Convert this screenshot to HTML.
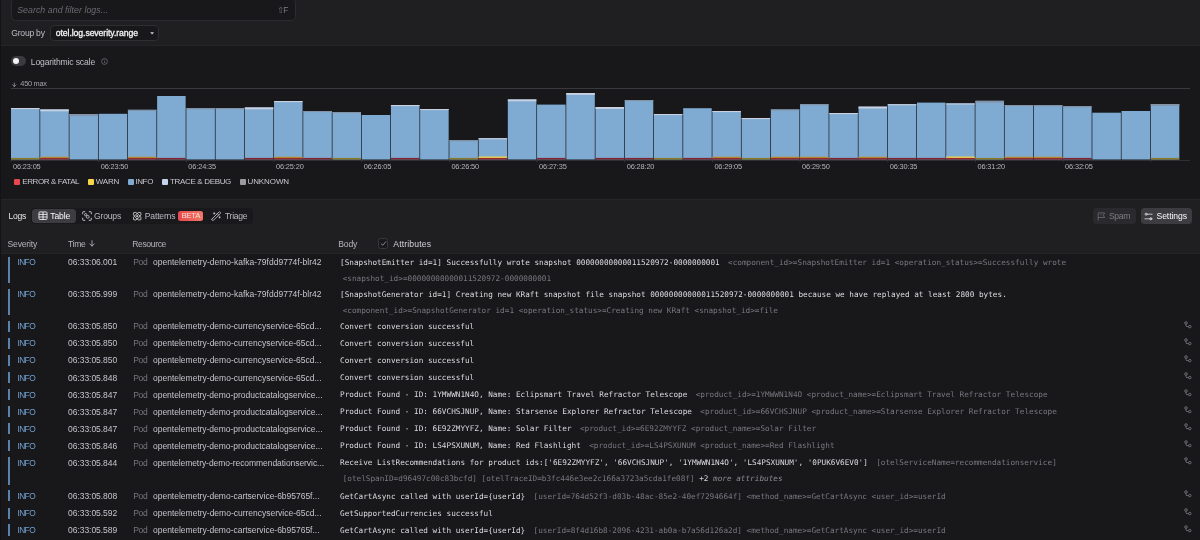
<!DOCTYPE html>
<html lang="en"><head><meta charset="utf-8"><title>Logs</title>
<style>
html,body{margin:0;padding:0;background:#18181b;}
body{width:1200px;height:540px;position:relative;overflow:hidden;font-family:"Liberation Sans", "DejaVu Sans", sans-serif;}
#app{position:absolute;left:0;top:0;width:1200px;height:540px;overflow:hidden;will-change:transform;}
#app>div,#app>svg{position:absolute;}
#app>span{position:absolute;white-space:pre;line-height:12px;height:12px;}
</style></head><body><div id="app">
<div style="left:0px;top:0px;width:1200px;height:45.6px;background:#1f1f22;"></div>
<div style="left:0px;top:45.6px;width:1200px;height:153.4px;background:#18181b;"></div>
<div style="left:0px;top:45.1px;width:1200px;height:1px;background:#252528;"></div>
<div style="left:0px;top:199px;width:1200px;height:55px;background:#1f1f22;"></div>
<div style="left:0px;top:198.6px;width:1200px;height:1px;background:#262629;"></div>
<div style="left:0px;top:254px;width:1200px;height:286px;background:#18181b;"></div>
<div style="left:0px;top:253.3px;width:1200px;height:0.8px;background:#242427;"></div>
<div style="left:0px;top:0px;width:1.2px;height:540px;background:#131315;"></div>
<div style="left:11px;top:-2.5px;width:284.7px;height:23.3px;background:#18181b;border:1px solid #2c2c30;border-radius:4.5px;box-sizing:border-box;"></div>
<div style="left:49.8px;top:25px;width:109.1px;height:16.1px;background:#18181b;border:1px solid #2e2e32;border-radius:4px;box-sizing:border-box;"></div>
<svg style="left:149.8px;top:32px" width="4.2" height="2.6" viewBox="0 0 4.2 2.6"><path d="M0.2 0.2 L4 0.2 L2.1 2.4 Z" fill="#d4d4d8"/></svg>
<div style="left:11.3px;top:56.3px;width:14.6px;height:9.6px;background:#3a3a3f;border-radius:5px;"></div>
<div style="left:12.7px;top:57.7px;width:6.8px;height:6.8px;background:#f4f4f5;border-radius:50%;"></div>
<svg style="left:101px;top:57.9px" width="7" height="7" viewBox="0 0 7 7"><circle cx="3.5" cy="3.5" r="2.9" fill="none" stroke="#77777f" stroke-width="0.7"/><path d="M3.5 3.1V5" stroke="#77777f" stroke-width="0.7"/><circle cx="3.5" cy="2.1" r="0.45" fill="#77777f"/></svg>
<svg style="left:12px;top:81.6px" width="4.6" height="5.4" viewBox="0 0 4.6 5.4" fill="none" stroke="#a1a1aa" stroke-width="0.75" stroke-linecap="round" stroke-linejoin="round"><path d="M2.3 1V4.6M0.6 2.9L2.3 4.6L4 2.9"/></svg>
<div style="left:11px;top:87.9px;width:1179px;height:0.9px;background:#3a3a3e;"></div>
<div style="left:11px;top:159.7px;width:1179px;height:0.8px;background:#303034;"></div>
<svg style="left:0;top:0" width="1200" height="200" viewBox="0 0 1200 200" shape-rendering="auto"><rect x="11.00" y="108.00" width="28.53" height="51.50" fill="#7fabd2"/><rect x="11.00" y="108.00" width="28.53" height="1.1" fill="#c9d0df"/><rect x="11.00" y="157.90" width="28.53" height="1.6" fill="#8a7a2c"/><rect x="40.23" y="109.40" width="28.53" height="50.10" fill="#7fabd2"/><rect x="40.23" y="109.40" width="28.53" height="1.9" fill="#c9d0df"/><rect x="40.23" y="156.70" width="28.53" height="1.3" fill="#b8922f"/><rect x="40.23" y="157.90" width="28.53" height="1.6" fill="#94282c"/><rect x="69.45" y="114.00" width="28.53" height="45.50" fill="#7fabd2"/><rect x="69.45" y="114.00" width="28.53" height="1.9" fill="#8493a6"/><rect x="98.68" y="113.80" width="28.53" height="45.70" fill="#7fabd2"/><rect x="127.90" y="109.80" width="28.53" height="49.70" fill="#7fabd2"/><rect x="127.90" y="109.80" width="28.53" height="1.1" fill="#8493a6"/><rect x="127.90" y="156.70" width="28.53" height="1.3" fill="#b8922f"/><rect x="127.90" y="157.90" width="28.53" height="1.6" fill="#94282c"/><rect x="157.12" y="96.00" width="28.53" height="63.50" fill="#7fabd2"/><rect x="157.12" y="157.90" width="28.53" height="1.6" fill="#7f2530"/><rect x="186.35" y="108.20" width="28.53" height="51.30" fill="#7fabd2"/><rect x="186.35" y="108.20" width="28.53" height="1.1" fill="#8493a6"/><rect x="215.58" y="108.00" width="28.53" height="51.50" fill="#7fabd2"/><rect x="215.58" y="108.00" width="28.53" height="1.1" fill="#8493a6"/><rect x="244.80" y="107.40" width="28.53" height="52.10" fill="#7fabd2"/><rect x="244.80" y="107.40" width="28.53" height="1.9" fill="#c9d0df"/><rect x="244.80" y="157.90" width="28.53" height="1.6" fill="#7f2530"/><rect x="274.03" y="101.00" width="28.53" height="58.50" fill="#7fabd2"/><rect x="274.03" y="101.00" width="28.53" height="1.1" fill="#c9d0df"/><rect x="274.03" y="156.70" width="28.53" height="1.3" fill="#b8922f"/><rect x="274.03" y="157.90" width="28.53" height="1.6" fill="#94282c"/><rect x="303.25" y="111.00" width="28.53" height="48.50" fill="#7fabd2"/><rect x="303.25" y="111.00" width="28.53" height="1.1" fill="#8493a6"/><rect x="303.25" y="157.90" width="28.53" height="1.6" fill="#7f2530"/><rect x="332.48" y="112.00" width="28.53" height="47.50" fill="#7fabd2"/><rect x="332.48" y="112.00" width="28.53" height="1.1" fill="#8493a6"/><rect x="332.48" y="157.90" width="28.53" height="1.6" fill="#8a7a2c"/><rect x="361.70" y="115.00" width="28.53" height="44.50" fill="#7fabd2"/><rect x="390.93" y="105.00" width="28.53" height="54.50" fill="#7fabd2"/><rect x="390.93" y="105.00" width="28.53" height="1.1" fill="#c9d0df"/><rect x="390.93" y="157.90" width="28.53" height="1.6" fill="#7f2530"/><rect x="420.15" y="109.00" width="28.53" height="50.50" fill="#7fabd2"/><rect x="420.15" y="109.00" width="28.53" height="1.1" fill="#c9d0df"/><rect x="449.38" y="140.20" width="28.53" height="19.30" fill="#7fabd2"/><rect x="449.38" y="140.20" width="28.53" height="1.1" fill="#8493a6"/><rect x="449.38" y="157.90" width="28.53" height="1.6" fill="#8a7a2c"/><rect x="478.60" y="138.20" width="28.53" height="21.30" fill="#7fabd2"/><rect x="478.60" y="138.20" width="28.53" height="1.1" fill="#c9d0df"/><rect x="478.60" y="156.50" width="28.53" height="1.5" fill="#ecd552"/><rect x="478.60" y="157.90" width="28.53" height="1.6" fill="#94282c"/><rect x="507.83" y="99.40" width="28.53" height="60.10" fill="#7fabd2"/><rect x="507.83" y="99.40" width="28.53" height="1.9" fill="#c9d0df"/><rect x="537.05" y="104.60" width="28.53" height="54.90" fill="#7fabd2"/><rect x="537.05" y="157.90" width="28.53" height="1.6" fill="#7f2530"/><rect x="566.27" y="93.00" width="28.53" height="66.50" fill="#7fabd2"/><rect x="566.27" y="93.00" width="28.53" height="1.9" fill="#c9d0df"/><rect x="595.50" y="107.00" width="28.53" height="52.50" fill="#7fabd2"/><rect x="595.50" y="107.00" width="28.53" height="1.9" fill="#c9d0df"/><rect x="595.50" y="157.90" width="28.53" height="1.6" fill="#7f2530"/><rect x="624.73" y="100.00" width="28.53" height="59.50" fill="#7fabd2"/><rect x="624.73" y="100.00" width="28.53" height="1.1" fill="#8493a6"/><rect x="624.73" y="157.90" width="28.53" height="1.6" fill="#7f2530"/><rect x="653.95" y="114.00" width="28.53" height="45.50" fill="#7fabd2"/><rect x="653.95" y="114.00" width="28.53" height="1.1" fill="#c9d0df"/><rect x="653.95" y="157.90" width="28.53" height="1.6" fill="#8a7a2c"/><rect x="683.18" y="108.20" width="28.53" height="51.30" fill="#7fabd2"/><rect x="683.18" y="157.90" width="28.53" height="1.6" fill="#7f2530"/><rect x="712.40" y="111.00" width="28.53" height="48.50" fill="#7fabd2"/><rect x="712.40" y="111.00" width="28.53" height="1.1" fill="#c9d0df"/><rect x="712.40" y="156.70" width="28.53" height="1.3" fill="#b8922f"/><rect x="712.40" y="157.90" width="28.53" height="1.6" fill="#94282c"/><rect x="741.62" y="118.00" width="28.53" height="41.50" fill="#7fabd2"/><rect x="741.62" y="118.00" width="28.53" height="1.1" fill="#c9d0df"/><rect x="741.62" y="157.90" width="28.53" height="1.6" fill="#8a7a2c"/><rect x="770.85" y="109.40" width="28.53" height="50.10" fill="#7fabd2"/><rect x="770.85" y="109.40" width="28.53" height="1.1" fill="#8493a6"/><rect x="770.85" y="156.70" width="28.53" height="1.3" fill="#b8922f"/><rect x="770.85" y="157.90" width="28.53" height="1.6" fill="#94282c"/><rect x="800.08" y="104.20" width="28.53" height="55.30" fill="#7fabd2"/><rect x="800.08" y="104.20" width="28.53" height="1.1" fill="#8493a6"/><rect x="800.08" y="156.70" width="28.53" height="1.3" fill="#b8922f"/><rect x="800.08" y="157.90" width="28.53" height="1.6" fill="#94282c"/><rect x="829.30" y="113.00" width="28.53" height="46.50" fill="#7fabd2"/><rect x="829.30" y="113.00" width="28.53" height="1.1" fill="#c9d0df"/><rect x="829.30" y="157.90" width="28.53" height="1.6" fill="#7f2530"/><rect x="858.53" y="106.60" width="28.53" height="52.90" fill="#7fabd2"/><rect x="858.53" y="106.60" width="28.53" height="1.9" fill="#c9d0df"/><rect x="858.53" y="156.70" width="28.53" height="1.3" fill="#b8922f"/><rect x="858.53" y="157.90" width="28.53" height="1.6" fill="#94282c"/><rect x="887.75" y="104.20" width="28.53" height="55.30" fill="#7fabd2"/><rect x="887.75" y="104.20" width="28.53" height="1.1" fill="#c9d0df"/><rect x="887.75" y="157.90" width="28.53" height="1.6" fill="#7f2530"/><rect x="916.98" y="102.60" width="28.53" height="56.90" fill="#7fabd2"/><rect x="916.98" y="157.90" width="28.53" height="1.6" fill="#7f2530"/><rect x="946.20" y="103.40" width="28.53" height="56.10" fill="#7fabd2"/><rect x="946.20" y="103.40" width="28.53" height="1.1" fill="#c9d0df"/><rect x="946.20" y="156.50" width="28.53" height="1.5" fill="#ecd552"/><rect x="946.20" y="157.90" width="28.53" height="1.6" fill="#94282c"/><rect x="975.43" y="100.80" width="28.53" height="58.70" fill="#7fabd2"/><rect x="975.43" y="100.80" width="28.53" height="1.9" fill="#8493a6"/><rect x="975.43" y="157.90" width="28.53" height="1.6" fill="#8a7a2c"/><rect x="1004.65" y="105.00" width="28.53" height="54.50" fill="#7fabd2"/><rect x="1004.65" y="105.00" width="28.53" height="1.1" fill="#8493a6"/><rect x="1004.65" y="156.70" width="28.53" height="1.3" fill="#b8922f"/><rect x="1004.65" y="157.90" width="28.53" height="1.6" fill="#94282c"/><rect x="1033.88" y="105.20" width="28.53" height="54.30" fill="#7fabd2"/><rect x="1033.88" y="105.20" width="28.53" height="1.1" fill="#8493a6"/><rect x="1033.88" y="156.70" width="28.53" height="1.3" fill="#b8922f"/><rect x="1033.88" y="157.90" width="28.53" height="1.6" fill="#94282c"/><rect x="1063.10" y="106.20" width="28.53" height="53.30" fill="#7fabd2"/><rect x="1063.10" y="106.20" width="28.53" height="1.1" fill="#8493a6"/><rect x="1063.10" y="157.90" width="28.53" height="1.6" fill="#7f2530"/><rect x="1092.33" y="112.70" width="28.53" height="46.80" fill="#7fabd2"/><rect x="1121.55" y="111.00" width="28.53" height="48.50" fill="#7fabd2"/><rect x="1150.78" y="104.00" width="28.53" height="55.50" fill="#7fabd2"/><rect x="1150.78" y="104.00" width="28.53" height="1.9" fill="#8493a6"/><rect x="1150.78" y="157.90" width="28.53" height="1.6" fill="#8a7a2c"/><rect x="10.60" y="160" width="0.8" height="2.2" fill="#3a3a3e"/><rect x="98.28" y="160" width="0.8" height="2.2" fill="#3a3a3e"/><rect x="185.95" y="160" width="0.8" height="2.2" fill="#3a3a3e"/><rect x="273.63" y="160" width="0.8" height="2.2" fill="#3a3a3e"/><rect x="361.30" y="160" width="0.8" height="2.2" fill="#3a3a3e"/><rect x="448.98" y="160" width="0.8" height="2.2" fill="#3a3a3e"/><rect x="536.65" y="160" width="0.8" height="2.2" fill="#3a3a3e"/><rect x="624.33" y="160" width="0.8" height="2.2" fill="#3a3a3e"/><rect x="712.00" y="160" width="0.8" height="2.2" fill="#3a3a3e"/><rect x="799.68" y="160" width="0.8" height="2.2" fill="#3a3a3e"/><rect x="887.35" y="160" width="0.8" height="2.2" fill="#3a3a3e"/><rect x="975.03" y="160" width="0.8" height="2.2" fill="#3a3a3e"/><rect x="1062.70" y="160" width="0.8" height="2.2" fill="#3a3a3e"/><rect x="1150.38" y="160" width="0.8" height="2.2" fill="#3a3a3e"/></svg>
<div style="left:13.6px;top:178.5px;width:6.2px;height:6.3px;background:#e5484d;border-radius:1px;"></div>
<div style="left:87.6px;top:178.5px;width:6.2px;height:6.3px;background:#f9d648;border-radius:1px;"></div>
<div style="left:127.6px;top:178.5px;width:6.2px;height:6.3px;background:#7fabd2;border-radius:1px;"></div>
<div style="left:161.6px;top:178.5px;width:6.2px;height:6.3px;background:#c5d3ec;border-radius:1px;"></div>
<div style="left:239.6px;top:178.5px;width:6.2px;height:6.3px;background:#9a9aa0;border-radius:1px;"></div>
<div style="left:31px;top:207.8px;width:222px;height:16.6px;background:#19191c;border-radius:4px;"></div>
<div style="left:32px;top:208.8px;width:43.5px;height:14.6px;background:#3c3c41;border-radius:3.5px;"></div>
<div style="left:178px;top:211px;width:25.3px;height:10.4px;background:linear-gradient(90deg,#e5484d,#ef7865);border-radius:2.5px;"></div>
<svg style="left:37.6px;top:211.4px" width="10" height="9.4" viewBox="0 0 10 9.4" fill="none" stroke="#f4f4f5" stroke-width="0.9"><rect x="0.95" y="0.95" width="8.1" height="7.5" rx="0.9"/><path d="M0.95 3.4H9.05M0.95 6H9.05M5 0.95V8.45"/></svg>
<svg style="left:81.7px;top:211.2px" width="10" height="10" viewBox="0 0 10 10" fill="none" stroke="#d4d4d8" stroke-width="0.8"><path d="M0.7 3.2V1.3Q0.7 0.7 1.3 0.7H3.2M6.8 0.7H8.7Q9.3 0.7 9.3 1.3V3.2M9.3 6.8V8.7Q9.3 9.3 8.7 9.3H6.8M3.2 9.3H1.3Q0.7 9.3 0.7 8.7V6.8" stroke-width="0.9"/><circle cx="3.7" cy="3.7" r="1.15"/><rect x="4.4" y="4.6" width="2.7" height="2.5" rx="0.9"/></svg>
<svg style="left:132.2px;top:211px" width="10.4" height="10.4" viewBox="0 0 10.4 10.4" fill="none" stroke="#d4d4d8" stroke-width="0.8"><ellipse cx="5.2" cy="5.2" rx="5" ry="2.2" transform="rotate(45 5.2 5.2)"/><ellipse cx="5.2" cy="5.2" rx="5" ry="2.2" transform="rotate(-45 5.2 5.2)"/><circle cx="5.2" cy="5.2" r="0.7" fill="#d4d4d8"/></svg>
<svg style="left:211px;top:211px" width="10.4" height="10.4" viewBox="0 0 10.4 10.4" fill="none" stroke="#d4d4d8" stroke-width="0.9" stroke-linecap="round"><rect x="-0.4" y="4.2" width="11.2" height="2" rx="0.6" transform="rotate(-45 5.2 5.2)" stroke-width="0.75"/><path d="M6.3 2.7L7.7 4.1" stroke-width="0.7"/><path d="M3.2 1.6V3.2M2.4 2.4H4M8.6 5.6V7M7.9 6.3H9.3" stroke-width="0.7"/></svg>
<div style="left:1093px;top:208px;width:42.8px;height:16.2px;background:#2a2a2e;border-radius:3.5px;"></div>
<svg style="left:1096.8px;top:211.5px" width="9" height="9" viewBox="0 0 9 9" fill="none" stroke="#6d6d75" stroke-width="0.8"><path d="M1.2 8.4V0.9H7.6L6.4 3.2L7.6 5.5H1.2"/><path d="M4 2.2V3.4M4 4.2V4.3"/></svg>
<div style="left:1140.5px;top:208px;width:51.5px;height:16.2px;background:#3c3c41;border-radius:3.5px;"></div>
<svg style="left:1144.3px;top:211.7px" width="9" height="9" viewBox="0 0 9 9" fill="none" stroke="#e4e4e7" stroke-width="0.8" stroke-linecap="round"><path d="M3.3 2.2H8.1M0.9 6.8H5.6"/><circle cx="2.1" cy="2.2" r="1.05"/><circle cx="6.8" cy="6.8" r="1.05" fill="#e4e4e7" fill-opacity="0.5"/></svg>
<svg style="left:89.4px;top:240.4px" width="6" height="7" viewBox="0 0 6 7" fill="none" stroke="#b4b4bb" stroke-width="0.85" stroke-linecap="round" stroke-linejoin="round"><path d="M3 0.7V6.1M0.8 3.9L3 6.1L5.2 3.9"/></svg>
<div style="left:377.5px;top:238px;width:10.6px;height:10.6px;background:#19191c;border:0.8px solid #38383d;border-radius:2.5px;box-sizing:border-box;"></div>
<svg style="left:379.5px;top:240px" width="7" height="7" viewBox="0 0 7 7" fill="none" stroke="#a1a1aa" stroke-width="0.8" stroke-linecap="round" stroke-linejoin="round"><path d="M1.2 3.8L2.8 5.3L5.8 1.7"/></svg>
<div style="left:7.95px;top:256.7px;width:1.85px;height:26.19999999999999px;background:#5a82aa;"></div>
<div style="left:7.95px;top:288.7px;width:1.85px;height:25.900000000000034px;background:#5a82aa;"></div>
<div style="left:7.95px;top:320.7px;width:1.85px;height:11.399999999999977px;background:#5a82aa;"></div>
<svg style="left:1184.4px;top:320.8px" width="8.4" height="8.4" viewBox="0 0 8.4 8.4" fill="none" stroke="#8b8b93" stroke-width="0.7"><circle cx="2" cy="2" r="1.3"/><circle cx="5.8" cy="5.6" r="1.25"/><path d="M2 3.25V4.6Q2 5.6 3 5.6H4.55"/></svg>
<div style="left:7.95px;top:337.7px;width:1.85px;height:11.399999999999977px;background:#5a82aa;"></div>
<svg style="left:1184.4px;top:337.8px" width="8.4" height="8.4" viewBox="0 0 8.4 8.4" fill="none" stroke="#8b8b93" stroke-width="0.7"><circle cx="2" cy="2" r="1.3"/><circle cx="5.8" cy="5.6" r="1.25"/><path d="M2 3.25V4.6Q2 5.6 3 5.6H4.55"/></svg>
<div style="left:7.95px;top:354.7px;width:1.85px;height:11.399999999999977px;background:#5a82aa;"></div>
<svg style="left:1184.4px;top:354.8px" width="8.4" height="8.4" viewBox="0 0 8.4 8.4" fill="none" stroke="#8b8b93" stroke-width="0.7"><circle cx="2" cy="2" r="1.3"/><circle cx="5.8" cy="5.6" r="1.25"/><path d="M2 3.25V4.6Q2 5.6 3 5.6H4.55"/></svg>
<div style="left:7.95px;top:371.8px;width:1.85px;height:11.399999999999977px;background:#5a82aa;"></div>
<svg style="left:1184.4px;top:371.9px" width="8.4" height="8.4" viewBox="0 0 8.4 8.4" fill="none" stroke="#8b8b93" stroke-width="0.7"><circle cx="2" cy="2" r="1.3"/><circle cx="5.8" cy="5.6" r="1.25"/><path d="M2 3.25V4.6Q2 5.6 3 5.6H4.55"/></svg>
<div style="left:7.95px;top:388.90000000000003px;width:1.85px;height:11.399999999999977px;background:#5a82aa;"></div>
<svg style="left:1184.4px;top:389.0px" width="8.4" height="8.4" viewBox="0 0 8.4 8.4" fill="none" stroke="#8b8b93" stroke-width="0.7"><circle cx="2" cy="2" r="1.3"/><circle cx="5.8" cy="5.6" r="1.25"/><path d="M2 3.25V4.6Q2 5.6 3 5.6H4.55"/></svg>
<div style="left:7.95px;top:405.90000000000003px;width:1.85px;height:11.399999999999977px;background:#5a82aa;"></div>
<svg style="left:1184.4px;top:406.0px" width="8.4" height="8.4" viewBox="0 0 8.4 8.4" fill="none" stroke="#8b8b93" stroke-width="0.7"><circle cx="2" cy="2" r="1.3"/><circle cx="5.8" cy="5.6" r="1.25"/><path d="M2 3.25V4.6Q2 5.6 3 5.6H4.55"/></svg>
<div style="left:7.95px;top:422.90000000000003px;width:1.85px;height:11.399999999999977px;background:#5a82aa;"></div>
<svg style="left:1184.4px;top:423.0px" width="8.4" height="8.4" viewBox="0 0 8.4 8.4" fill="none" stroke="#8b8b93" stroke-width="0.7"><circle cx="2" cy="2" r="1.3"/><circle cx="5.8" cy="5.6" r="1.25"/><path d="M2 3.25V4.6Q2 5.6 3 5.6H4.55"/></svg>
<div style="left:7.95px;top:439.90000000000003px;width:1.85px;height:11.399999999999977px;background:#5a82aa;"></div>
<svg style="left:1184.4px;top:440.0px" width="8.4" height="8.4" viewBox="0 0 8.4 8.4" fill="none" stroke="#8b8b93" stroke-width="0.7"><circle cx="2" cy="2" r="1.3"/><circle cx="5.8" cy="5.6" r="1.25"/><path d="M2 3.25V4.6Q2 5.6 3 5.6H4.55"/></svg>
<div style="left:7.95px;top:456.8px;width:1.85px;height:28.0px;background:#5a82aa;"></div>
<svg style="left:1184.4px;top:456.9px" width="8.4" height="8.4" viewBox="0 0 8.4 8.4" fill="none" stroke="#8b8b93" stroke-width="0.7"><circle cx="2" cy="2" r="1.3"/><circle cx="5.8" cy="5.6" r="1.25"/><path d="M2 3.25V4.6Q2 5.6 3 5.6H4.55"/></svg>
<div style="left:7.95px;top:490.1px;width:1.85px;height:11.399999999999977px;background:#5a82aa;"></div>
<svg style="left:1184.4px;top:490.2px" width="8.4" height="8.4" viewBox="0 0 8.4 8.4" fill="none" stroke="#8b8b93" stroke-width="0.7"><circle cx="2" cy="2" r="1.3"/><circle cx="5.8" cy="5.6" r="1.25"/><path d="M2 3.25V4.6Q2 5.6 3 5.6H4.55"/></svg>
<div style="left:7.95px;top:507.50000000000006px;width:1.85px;height:11.400000000000034px;background:#5a82aa;"></div>
<svg style="left:1184.4px;top:507.6px" width="8.4" height="8.4" viewBox="0 0 8.4 8.4" fill="none" stroke="#8b8b93" stroke-width="0.7"><circle cx="2" cy="2" r="1.3"/><circle cx="5.8" cy="5.6" r="1.25"/><path d="M2 3.25V4.6Q2 5.6 3 5.6H4.55"/></svg>
<div style="left:7.95px;top:524.4px;width:1.85px;height:11.400000000000091px;background:#5a82aa;"></div>
<svg style="left:1184.4px;top:524.5px" width="8.4" height="8.4" viewBox="0 0 8.4 8.4" fill="none" stroke="#8b8b93" stroke-width="0.7"><circle cx="2" cy="2" r="1.3"/><circle cx="5.8" cy="5.6" r="1.25"/><path d="M2 3.25V4.6Q2 5.6 3 5.6H4.55"/></svg>
<span id="t0" style='left:17.20px;top:4.20px;font-size:8.8px;color:#6b6b73;font-style:italic;letter-spacing:0.041px;'>Search and filter logs...</span>
<span id="t1" style='left:277.20px;top:4.20px;font-size:8.2px;color:#6b6b73;font-family:"DejaVu Sans", sans-serif;'>⇧</span>
<span id="t2" style='left:283.30px;top:4.20px;font-size:8.3px;color:#7c7c84;letter-spacing:-0.878px;'>F</span>
<span id="t3" style='left:11.30px;top:27.20px;font-size:8.6px;color:#bcbcc3;letter-spacing:-0.245px;'>Group by</span>
<span id="t4" style='left:55.80px;top:27.20px;font-size:8.7px;color:#f4f4f5;-webkit-text-stroke:0.3px #f4f4f5;letter-spacing:-0.094px;'>otel.log.severity.range</span>
<span id="t5" style='left:30.80px;top:56.00px;font-size:8.6px;color:#bfbfc6;letter-spacing:-0.157px;'>Logarithmic scale</span>
<span id="t6" style='left:20.30px;top:77.80px;font-size:7.4px;color:#a1a1aa;letter-spacing:-0.280px;'>450 max</span>
<span id="t7" style='left:13.00px;top:160.70px;font-size:7.4px;color:#b4b4bb;letter-spacing:-0.148px;'>06:23:05</span>
<span id="t8" style='left:100.68px;top:160.70px;font-size:7.4px;color:#b4b4bb;letter-spacing:-0.148px;'>06:23:50</span>
<span id="t9" style='left:188.35px;top:160.70px;font-size:7.4px;color:#b4b4bb;letter-spacing:-0.148px;'>06:24:35</span>
<span id="t10" style='left:276.03px;top:160.70px;font-size:7.4px;color:#b4b4bb;letter-spacing:-0.148px;'>06:25:20</span>
<span id="t11" style='left:363.70px;top:160.70px;font-size:7.4px;color:#b4b4bb;letter-spacing:-0.148px;'>06:26:05</span>
<span id="t12" style='left:451.38px;top:160.70px;font-size:7.4px;color:#b4b4bb;letter-spacing:-0.148px;'>06:26:50</span>
<span id="t13" style='left:539.05px;top:160.70px;font-size:7.4px;color:#b4b4bb;letter-spacing:-0.148px;'>06:27:35</span>
<span id="t14" style='left:626.73px;top:160.70px;font-size:7.4px;color:#b4b4bb;letter-spacing:-0.148px;'>06:28:20</span>
<span id="t15" style='left:714.40px;top:160.70px;font-size:7.4px;color:#b4b4bb;letter-spacing:-0.148px;'>06:29:05</span>
<span id="t16" style='left:802.08px;top:160.70px;font-size:7.4px;color:#b4b4bb;letter-spacing:-0.148px;'>06:29:50</span>
<span id="t17" style='left:889.75px;top:160.70px;font-size:7.4px;color:#b4b4bb;letter-spacing:-0.148px;'>06:30:35</span>
<span id="t18" style='left:977.43px;top:160.70px;font-size:7.4px;color:#b4b4bb;letter-spacing:-0.148px;'>06:31:20</span>
<span id="t19" style='left:1065.10px;top:160.70px;font-size:7.4px;color:#b4b4bb;letter-spacing:-0.148px;'>06:32:05</span>
<span id="t20" style='left:22.20px;top:175.90px;font-size:8.0px;color:#c9c9cf;letter-spacing:-0.380px;'>ERROR &amp; FATAL</span>
<span id="t21" style='left:95.80px;top:175.90px;font-size:8.0px;color:#c9c9cf;letter-spacing:-0.189px;'>WARN</span>
<span id="t22" style='left:135.30px;top:175.90px;font-size:8.0px;color:#c9c9cf;letter-spacing:-0.352px;'>INFO</span>
<span id="t23" style='left:170.00px;top:175.90px;font-size:8.0px;color:#c9c9cf;letter-spacing:-0.334px;'>TRACE &amp; DEBUG</span>
<span id="t24" style='left:247.50px;top:175.90px;font-size:8.0px;color:#c9c9cf;letter-spacing:-0.103px;'>UNKNOWN</span>
<span id="t25" style='left:8.50px;top:210.20px;font-size:8.6px;color:#e4e4e7;letter-spacing:-0.260px;'>Logs</span>
<span id="t26" style='left:50.30px;top:210.20px;font-size:8.6px;color:#fafafa;letter-spacing:-0.149px;'>Table</span>
<span id="t27" style='left:94.00px;top:210.20px;font-size:8.6px;color:#b9b9c0;letter-spacing:-0.198px;'>Groups</span>
<span id="t28" style='left:144.80px;top:210.20px;font-size:8.6px;color:#b9b9c0;letter-spacing:-0.189px;'>Patterns</span>
<span id="t29" style='left:181.40px;top:210.30px;font-size:7.8px;color:#ffdcd6;letter-spacing:-0.274px;'>BETA</span>
<span id="t30" style='left:225.00px;top:210.20px;font-size:8.6px;color:#b9b9c0;letter-spacing:-0.308px;'>Triage</span>
<span id="t31" style='left:1109.00px;top:210.20px;font-size:8.6px;color:#7d7d85;letter-spacing:-0.363px;'>Spam</span>
<span id="t32" style='left:1156.50px;top:210.20px;font-size:8.6px;color:#fafafa;letter-spacing:-0.070px;'>Settings</span>
<span id="t33" style='left:7.50px;top:237.60px;font-size:8.6px;color:#b4b4bb;letter-spacing:-0.193px;'>Severity</span>
<span id="t34" style='left:68.00px;top:237.60px;font-size:8.6px;color:#b4b4bb;letter-spacing:-0.320px;'>Time</span>
<span id="t35" style='left:132.20px;top:237.60px;font-size:8.6px;color:#b4b4bb;letter-spacing:-0.373px;'>Resource</span>
<span id="t36" style='left:338.30px;top:237.60px;font-size:8.6px;color:#b4b4bb;letter-spacing:-0.198px;'>Body</span>
<span id="t37" style='left:393.30px;top:237.60px;font-size:8.6px;color:#d4d4d8;letter-spacing:0.149px;'>Attributes</span>
<span id="t38" style='left:17.40px;top:256.40px;font-size:8.4px;color:#72a0cf;letter-spacing:-0.579px;'>INFO</span>
<span id="t39" style='left:68.00px;top:256.40px;font-size:8.5px;color:#c4c4cb;letter-spacing:-0.037px;'>06:33:06.001</span>
<span id="t40" style='left:133.30px;top:256.40px;font-size:8.5px;color:#77777f;letter-spacing:-0.375px;'>Pod</span>
<span id="t41" style='left:153.00px;top:256.40px;font-size:8.5px;color:#c4c4cb;letter-spacing:0.007px;'>opentelemetry-demo-kafka-79fdd9774f-blr42</span>
<span id="t42" style='left:340.00px;top:257.20px;font-size:7.69px;color:#dcdce0;font-family:"DejaVu Sans Mono", "Liberation Mono", monospace;letter-spacing:0.002px;'>[SnapshotEmitter id=1] Successfully wrote snapshot 00000000000011520972-0000000001</span>
<span id="t43" style='left:728.06px;top:257.20px;font-size:7.69px;color:#77777f;font-family:"DejaVu Sans Mono", "Liberation Mono", monospace;letter-spacing:0.002px;'>&lt;component_id&gt;=SnapshotEmitter id=1 &lt;operation_status&gt;=Successfully wrote</span>
<span id="t44" style='left:342.70px;top:273.20px;font-size:7.69px;color:#77777f;font-family:"DejaVu Sans Mono", "Liberation Mono", monospace;letter-spacing:0.002px;'>&lt;snapshot_id&gt;=00000000000011520972-0000000001</span>
<span id="t45" style='left:17.40px;top:288.40px;font-size:8.4px;color:#72a0cf;letter-spacing:-0.579px;'>INFO</span>
<span id="t46" style='left:68.00px;top:288.40px;font-size:8.5px;color:#c4c4cb;letter-spacing:-0.037px;'>06:33:05.999</span>
<span id="t47" style='left:133.30px;top:288.40px;font-size:8.5px;color:#77777f;letter-spacing:-0.375px;'>Pod</span>
<span id="t48" style='left:153.00px;top:288.40px;font-size:8.5px;color:#c4c4cb;letter-spacing:0.007px;'>opentelemetry-demo-kafka-79fdd9774f-blr42</span>
<span id="t49" style='left:340.00px;top:289.20px;font-size:7.69px;color:#dcdce0;font-family:"DejaVu Sans Mono", "Liberation Mono", monospace;letter-spacing:0.002px;'>[SnapshotGenerator id=1] Creating new KRaft snapshot file snapshot 00000000000011520972-0000000001 because we have replayed at least 2800 bytes.</span>
<span id="t50" style='left:342.70px;top:305.20px;font-size:7.69px;color:#77777f;font-family:"DejaVu Sans Mono", "Liberation Mono", monospace;letter-spacing:0.002px;'>&lt;component_id&gt;=SnapshotGenerator id=1 &lt;operation_status&gt;=Creating new KRaft &lt;snapshot_id&gt;=file</span>
<span id="t51" style='left:17.40px;top:320.40px;font-size:8.4px;color:#72a0cf;letter-spacing:-0.579px;'>INFO</span>
<span id="t52" style='left:68.00px;top:320.40px;font-size:8.5px;color:#c4c4cb;letter-spacing:-0.037px;'>06:33:05.850</span>
<span id="t53" style='left:133.30px;top:320.40px;font-size:8.5px;color:#77777f;letter-spacing:-0.375px;'>Pod</span>
<span id="t54" style='left:153.00px;top:320.40px;font-size:8.5px;color:#c4c4cb;letter-spacing:-0.004px;'>opentelemetry-demo-currencyservice-65cd...</span>
<span id="t55" style='left:340.00px;top:321.20px;font-size:7.69px;color:#dcdce0;font-family:"DejaVu Sans Mono", "Liberation Mono", monospace;letter-spacing:0.001px;'>Convert conversion successful</span>
<span id="t56" style='left:17.40px;top:337.40px;font-size:8.4px;color:#72a0cf;letter-spacing:-0.579px;'>INFO</span>
<span id="t57" style='left:68.00px;top:337.40px;font-size:8.5px;color:#c4c4cb;letter-spacing:-0.037px;'>06:33:05.850</span>
<span id="t58" style='left:133.30px;top:337.40px;font-size:8.5px;color:#77777f;letter-spacing:-0.375px;'>Pod</span>
<span id="t59" style='left:153.00px;top:337.40px;font-size:8.5px;color:#c4c4cb;letter-spacing:-0.004px;'>opentelemetry-demo-currencyservice-65cd...</span>
<span id="t60" style='left:340.00px;top:338.20px;font-size:7.69px;color:#dcdce0;font-family:"DejaVu Sans Mono", "Liberation Mono", monospace;letter-spacing:0.001px;'>Convert conversion successful</span>
<span id="t61" style='left:17.40px;top:354.40px;font-size:8.4px;color:#72a0cf;letter-spacing:-0.579px;'>INFO</span>
<span id="t62" style='left:68.00px;top:354.40px;font-size:8.5px;color:#c4c4cb;letter-spacing:-0.037px;'>06:33:05.850</span>
<span id="t63" style='left:133.30px;top:354.40px;font-size:8.5px;color:#77777f;letter-spacing:-0.375px;'>Pod</span>
<span id="t64" style='left:153.00px;top:354.40px;font-size:8.5px;color:#c4c4cb;letter-spacing:-0.004px;'>opentelemetry-demo-currencyservice-65cd...</span>
<span id="t65" style='left:340.00px;top:355.20px;font-size:7.69px;color:#dcdce0;font-family:"DejaVu Sans Mono", "Liberation Mono", monospace;letter-spacing:0.001px;'>Convert conversion successful</span>
<span id="t66" style='left:17.40px;top:371.50px;font-size:8.4px;color:#72a0cf;letter-spacing:-0.579px;'>INFO</span>
<span id="t67" style='left:68.00px;top:371.50px;font-size:8.5px;color:#c4c4cb;letter-spacing:-0.037px;'>06:33:05.848</span>
<span id="t68" style='left:133.30px;top:371.50px;font-size:8.5px;color:#77777f;letter-spacing:-0.375px;'>Pod</span>
<span id="t69" style='left:153.00px;top:371.50px;font-size:8.5px;color:#c4c4cb;letter-spacing:-0.004px;'>opentelemetry-demo-currencyservice-65cd...</span>
<span id="t70" style='left:340.00px;top:372.30px;font-size:7.69px;color:#dcdce0;font-family:"DejaVu Sans Mono", "Liberation Mono", monospace;letter-spacing:0.001px;'>Convert conversion successful</span>
<span id="t71" style='left:17.40px;top:388.60px;font-size:8.4px;color:#72a0cf;letter-spacing:-0.579px;'>INFO</span>
<span id="t72" style='left:68.00px;top:388.60px;font-size:8.5px;color:#c4c4cb;letter-spacing:-0.037px;'>06:33:05.847</span>
<span id="t73" style='left:133.30px;top:388.60px;font-size:8.5px;color:#77777f;letter-spacing:-0.375px;'>Pod</span>
<span id="t74" style='left:153.00px;top:388.60px;font-size:8.5px;color:#c4c4cb;letter-spacing:-0.025px;'>opentelemetry-demo-productcatalogservice...</span>
<span id="t75" style='left:340.00px;top:389.40px;font-size:7.69px;color:#dcdce0;font-family:"DejaVu Sans Mono", "Liberation Mono", monospace;letter-spacing:0.002px;'>Product Found - ID: 1YMWWN1N4O, Name: Eclipsmart Travel Refractor Telescope</span>
<span id="t76" style='left:695.65px;top:389.40px;font-size:7.69px;color:#77777f;font-family:"DejaVu Sans Mono", "Liberation Mono", monospace;letter-spacing:0.002px;'>&lt;product_id&gt;=1YMWWN1N4O &lt;product_name&gt;=Eclipsmart Travel Refractor Telescope</span>
<span id="t77" style='left:17.40px;top:405.60px;font-size:8.4px;color:#72a0cf;letter-spacing:-0.579px;'>INFO</span>
<span id="t78" style='left:68.00px;top:405.60px;font-size:8.5px;color:#c4c4cb;letter-spacing:-0.037px;'>06:33:05.847</span>
<span id="t79" style='left:133.30px;top:405.60px;font-size:8.5px;color:#77777f;letter-spacing:-0.375px;'>Pod</span>
<span id="t80" style='left:153.00px;top:405.60px;font-size:8.5px;color:#c4c4cb;letter-spacing:-0.025px;'>opentelemetry-demo-productcatalogservice...</span>
<span id="t81" style='left:340.00px;top:406.40px;font-size:7.69px;color:#dcdce0;font-family:"DejaVu Sans Mono", "Liberation Mono", monospace;letter-spacing:0.002px;'>Product Found - ID: 66VCHSJNUP, Name: Starsense Explorer Refractor Telescope</span>
<span id="t82" style='left:700.28px;top:406.40px;font-size:7.69px;color:#77777f;font-family:"DejaVu Sans Mono", "Liberation Mono", monospace;letter-spacing:0.002px;'>&lt;product_id&gt;=66VCHSJNUP &lt;product_name&gt;=Starsense Explorer Refractor Telescope</span>
<span id="t83" style='left:17.40px;top:422.60px;font-size:8.4px;color:#72a0cf;letter-spacing:-0.579px;'>INFO</span>
<span id="t84" style='left:68.00px;top:422.60px;font-size:8.5px;color:#c4c4cb;letter-spacing:-0.037px;'>06:33:05.847</span>
<span id="t85" style='left:133.30px;top:422.60px;font-size:8.5px;color:#77777f;letter-spacing:-0.375px;'>Pod</span>
<span id="t86" style='left:153.00px;top:422.60px;font-size:8.5px;color:#c4c4cb;letter-spacing:-0.025px;'>opentelemetry-demo-productcatalogservice...</span>
<span id="t87" style='left:340.00px;top:423.40px;font-size:7.69px;color:#dcdce0;font-family:"DejaVu Sans Mono", "Liberation Mono", monospace;letter-spacing:0.002px;'>Product Found - ID: 6E92ZMYYFZ, Name: Solar Filter</span>
<span id="t88" style='left:579.90px;top:423.40px;font-size:7.69px;color:#77777f;font-family:"DejaVu Sans Mono", "Liberation Mono", monospace;letter-spacing:0.002px;'>&lt;product_id&gt;=6E92ZMYYFZ &lt;product_name&gt;=Solar Filter</span>
<span id="t89" style='left:17.40px;top:439.60px;font-size:8.4px;color:#72a0cf;letter-spacing:-0.579px;'>INFO</span>
<span id="t90" style='left:68.00px;top:439.60px;font-size:8.5px;color:#c4c4cb;letter-spacing:-0.037px;'>06:33:05.846</span>
<span id="t91" style='left:133.30px;top:439.60px;font-size:8.5px;color:#77777f;letter-spacing:-0.375px;'>Pod</span>
<span id="t92" style='left:153.00px;top:439.60px;font-size:8.5px;color:#c4c4cb;letter-spacing:-0.025px;'>opentelemetry-demo-productcatalogservice...</span>
<span id="t93" style='left:340.00px;top:440.40px;font-size:7.69px;color:#dcdce0;font-family:"DejaVu Sans Mono", "Liberation Mono", monospace;letter-spacing:0.002px;'>Product Found - ID: LS4PSXUNUM, Name: Red Flashlight</span>
<span id="t94" style='left:589.16px;top:440.40px;font-size:7.69px;color:#77777f;font-family:"DejaVu Sans Mono", "Liberation Mono", monospace;letter-spacing:0.001px;'>&lt;product_id&gt;=LS4PSXUNUM &lt;product_name&gt;=Red Flashlight</span>
<span id="t95" style='left:17.40px;top:456.50px;font-size:8.4px;color:#72a0cf;letter-spacing:-0.579px;'>INFO</span>
<span id="t96" style='left:68.00px;top:456.50px;font-size:8.5px;color:#c4c4cb;letter-spacing:-0.037px;'>06:33:05.844</span>
<span id="t97" style='left:133.30px;top:456.50px;font-size:8.5px;color:#77777f;letter-spacing:-0.375px;'>Pod</span>
<span id="t98" style='left:153.00px;top:456.50px;font-size:8.5px;color:#c4c4cb;letter-spacing:-0.057px;'>opentelemetry-demo-recommendationservic...</span>
<span id="t99" style='left:340.00px;top:457.30px;font-size:7.69px;color:#dcdce0;font-family:"DejaVu Sans Mono", "Liberation Mono", monospace;letter-spacing:0.002px;'>Receive ListRecommendations for product ids:['6E92ZMYYFZ', '66VCHSJNUP', '1YMWWN1N4O', 'LS4PSXUNUM', '0PUK6V6EV0']</span>
<span id="t100" style='left:876.22px;top:457.30px;font-size:7.69px;color:#77777f;font-family:"DejaVu Sans Mono", "Liberation Mono", monospace;letter-spacing:0.001px;'>[otelServiceName=recommendationservice]</span>
<span id="t101" style='left:342.70px;top:473.30px;font-size:7.69px;color:#77777f;font-family:"DejaVu Sans Mono", "Liberation Mono", monospace;letter-spacing:0.002px;'>[otelSpanID=d96497c00c83bcfd] [otelTraceID=b3fc446e3ee2c166a3723a5cda1fe08f]</span>
<span id="t102" style='left:699.21px;top:473.30px;font-size:7.69px;color:#d4d4d8;font-family:"DejaVu Sans Mono", "Liberation Mono", monospace;letter-spacing:-0.003px;'>+2</span>
<span id="t103" style='left:713.10px;top:473.30px;font-size:7.69px;color:#8a8a92;font-family:"DejaVu Sans Mono", "Liberation Mono", monospace;font-style:italic;'>more attributes</span>
<span id="t104" style='left:17.40px;top:489.80px;font-size:8.4px;color:#72a0cf;letter-spacing:-0.579px;'>INFO</span>
<span id="t105" style='left:68.00px;top:489.80px;font-size:8.5px;color:#c4c4cb;letter-spacing:-0.037px;'>06:33:05.808</span>
<span id="t106" style='left:133.30px;top:489.80px;font-size:8.5px;color:#77777f;letter-spacing:-0.375px;'>Pod</span>
<span id="t107" style='left:153.00px;top:489.80px;font-size:8.5px;color:#c4c4cb;letter-spacing:-0.018px;'>opentelemetry-demo-cartservice-6b95765f...</span>
<span id="t108" style='left:340.00px;top:490.60px;font-size:7.69px;color:#dcdce0;font-family:"DejaVu Sans Mono", "Liberation Mono", monospace;letter-spacing:0.001px;'>GetCartAsync called with userId={userId}</span>
<span id="t109" style='left:533.60px;top:490.60px;font-size:7.69px;color:#77777f;font-family:"DejaVu Sans Mono", "Liberation Mono", monospace;letter-spacing:0.002px;'>[userId=764d52f3-d03b-48ac-85e2-40ef7294664f] &lt;method_name&gt;=GetCartAsync &lt;user_id&gt;=userId</span>
<span id="t110" style='left:17.40px;top:507.20px;font-size:8.4px;color:#72a0cf;letter-spacing:-0.579px;'>INFO</span>
<span id="t111" style='left:68.00px;top:507.20px;font-size:8.5px;color:#c4c4cb;letter-spacing:-0.037px;'>06:33:05.592</span>
<span id="t112" style='left:133.30px;top:507.20px;font-size:8.5px;color:#77777f;letter-spacing:-0.375px;'>Pod</span>
<span id="t113" style='left:153.00px;top:507.20px;font-size:8.5px;color:#c4c4cb;letter-spacing:-0.004px;'>opentelemetry-demo-currencyservice-65cd...</span>
<span id="t114" style='left:340.00px;top:508.00px;font-size:7.69px;color:#dcdce0;font-family:"DejaVu Sans Mono", "Liberation Mono", monospace;letter-spacing:0.002px;'>GetSupportedCurrencies successful</span>
<span id="t115" style='left:17.40px;top:524.10px;font-size:8.4px;color:#72a0cf;letter-spacing:-0.579px;'>INFO</span>
<span id="t116" style='left:68.00px;top:524.10px;font-size:8.5px;color:#c4c4cb;letter-spacing:-0.037px;'>06:33:05.589</span>
<span id="t117" style='left:133.30px;top:524.10px;font-size:8.5px;color:#77777f;letter-spacing:-0.375px;'>Pod</span>
<span id="t118" style='left:153.00px;top:524.10px;font-size:8.5px;color:#c4c4cb;letter-spacing:-0.018px;'>opentelemetry-demo-cartservice-6b95765f...</span>
<span id="t119" style='left:340.00px;top:524.90px;font-size:7.69px;color:#dcdce0;font-family:"DejaVu Sans Mono", "Liberation Mono", monospace;letter-spacing:0.001px;'>GetCartAsync called with userId={userId}</span>
<span id="t120" style='left:533.60px;top:524.90px;font-size:7.69px;color:#77777f;font-family:"DejaVu Sans Mono", "Liberation Mono", monospace;letter-spacing:0.002px;'>[userId=8f4d16b8-2096-4231-ab0a-b7a56d126a2d] &lt;method_name&gt;=GetCartAsync &lt;user_id&gt;=userId</span>
</div></body></html>
